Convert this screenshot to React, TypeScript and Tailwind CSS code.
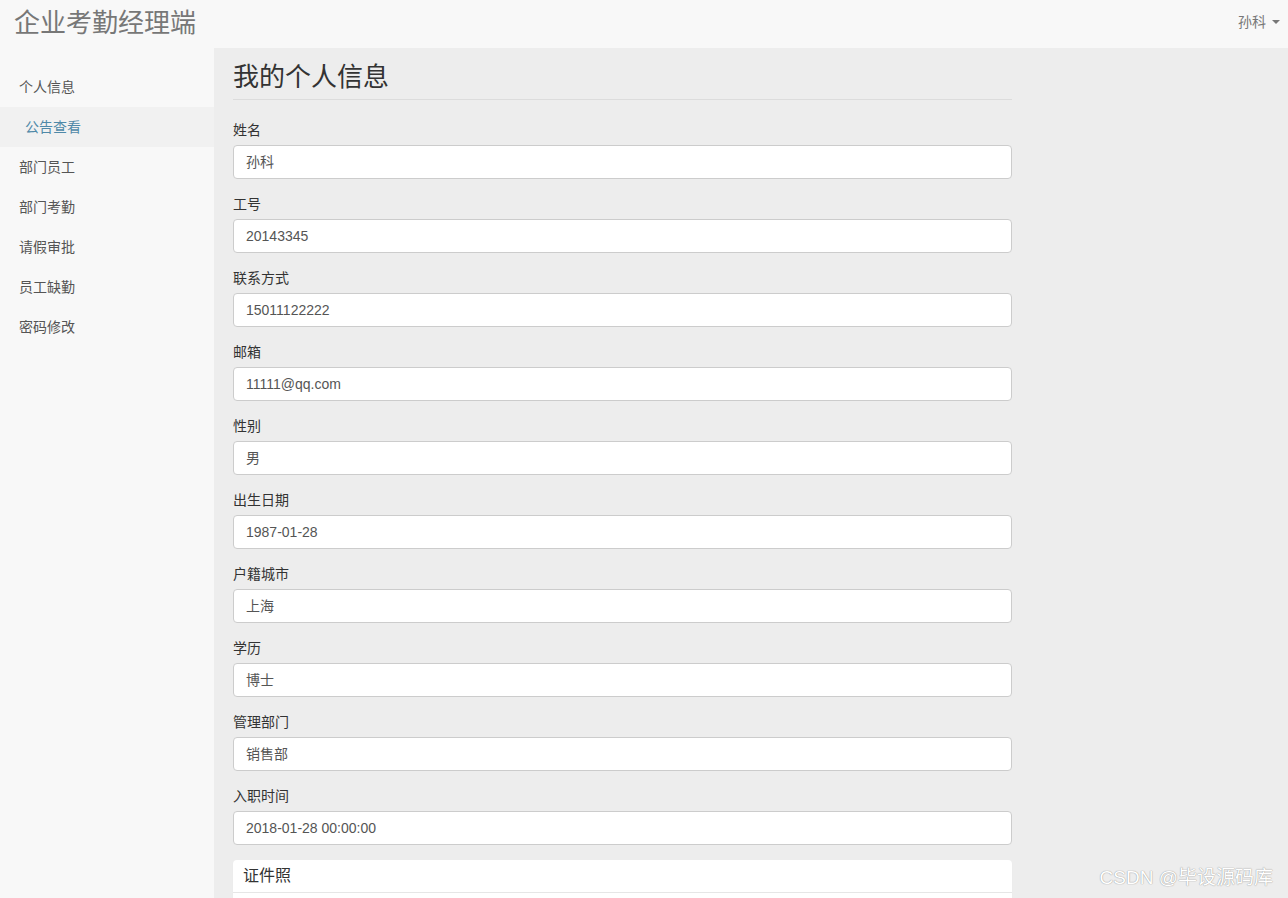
const FONT = "font-['Liberation_Sans','Noto_Sans_CJK_SC',sans-serif]";

const navItems = ["个人信息", "公告查看", "部门员工", "部门考勤", "请假审批", "员工缺勤", "密码修改"];

const fields: [string, string][] = [
  ["姓名", "孙科"],
  ["工号", "20143345"],
  ["联系方式", "15011122222"],
  ["邮箱", "11111@qq.com"],
  ["性别", "男"],
  ["出生日期", "1987-01-28"],
  ["户籍城市", "上海"],
  ["学历", "博士"],
  ["管理部门", "销售部"],
  ["入职时间", "2018-01-28 00:00:00"],
];

export default function App() {
  return (
    <div className={`h-[898px] overflow-hidden bg-[#f8f8f8] text-[#333] relative ${FONT}`}>
      <header className="h-12 flex items-center justify-between pl-[14px] pr-[8px]">
        <span className="text-[26px] leading-none text-[#777] -mt-[3px]">企业考勤经理端</span>
        <span className="flex items-center gap-[6px] text-sm text-[#777] -mt-[5px]">
          孙科
          <span className="w-0 h-0 border-l-[4px] border-r-[4px] border-t-[4px] border-l-transparent border-r-transparent border-t-[#777]" />
        </span>
      </header>

      <div className="flex h-[850px]">
        <aside className="w-[214px] shrink-0 pt-[19px]">
          {navItems.map((item) => {
            const active = item === "公告查看";
            return (
              <div
                key={item}
                className={`h-10 flex items-center text-sm ${
                  active ? "bg-[#f1f1f1] text-[#4f89a8] pl-[25px]" : "text-[#555] pl-[19px]"
                }`}
              >
                {item}
              </div>
            );
          })}
        </aside>

        <main className="flex-1 bg-[#ededed] pl-[19px] pt-[13px]">
          <div className="w-[779px]">
            <h1 className="text-[26px] leading-[32px] text-[#333] pb-[6px] border-b border-[#dcdcdc] mb-[20px]">
              我的个人信息
            </h1>
            {fields.map(([label, value]) => (
              <div key={label} className="mb-[15px]">
                <label className="block text-sm leading-5 mb-[5px] text-[#333]">{label}</label>
                <div className="h-[34px] bg-white border border-[#ccc] rounded-[4px] px-3 flex items-center text-sm text-[#555]">
                  {value}
                </div>
              </div>
            ))}
            <div className="bg-white rounded-t-[4px] shadow-[0_1px_1px_rgba(0,0,0,0.05)]">
              <div className="h-[33px] px-[10px] flex items-center text-base text-[#333] border-b border-[#e6e6e6]">
                证件照
              </div>
              <div className="h-10" />
            </div>
          </div>
        </main>
      </div>

      <div className="absolute right-[15px] bottom-[6px] text-[19px] text-white [text-shadow:0_0_1px_#999,0_0_1px_#aaa]">
        CSDN @毕设源码库
      </div>
    </div>
  );
}
